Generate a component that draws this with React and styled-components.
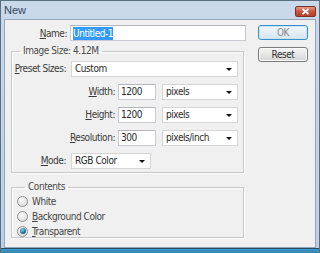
import React from 'react';
import styled, { createGlobalStyle } from 'styled-components';

const GlobalStyle = createGlobalStyle`
  html, body { margin: 0; padding: 0; background: #c5d6e8; }
  body {
    font-family: "Liberation Sans Narrow", "DejaVu Sans Condensed", "Liberation Sans", sans-serif;
    font-size: 10px;
    letter-spacing: -0.45px;
    color: #3a3a3a;
  }
`;

const Window = styled.div`
  width: 320px;
  height: 253px;
  box-sizing: border-box;
  display: flex;
  flex-direction: column;
  background: linear-gradient(#c9d9ea, #bccfe4);
  border: 1px solid #5b6f83;
  border-bottom: none;
`;

const TitleBar = styled.div`
  height: 18px;
  display: flex;
  align-items: center;
  justify-content: space-between;
  padding: 0 3px 0 3px;
`;

const Title = styled.span`
  font-family: "Liberation Sans", sans-serif;
  font-size: 11px;
  letter-spacing: 0;
  color: #34465c;
`;

const CloseButton = styled.div`
  width: 21px;
  height: 11px;
  margin-top: 2px;
  box-sizing: border-box;
  border: 1px solid #7a3328;
  border-radius: 2px;
  background: linear-gradient(#e49a86, #c9533f 50%, #b8402c);
  display: flex;
  align-items: center;
  justify-content: center;
`;

const Body = styled.div`
  flex: 1;
  margin: 0 3px;
  border: 1px solid #93a6ba;
  background: #f0f0f0;
  display: flex;
  padding: 5px 8px 0 6px;
`;

const BottomEdge = styled.div`
  height: 5px;
  background: linear-gradient(#2d4d63 0, #2d4d63 1px, #3f98c6 1px, #2f86b6);
`;

const LeftCol = styled.div`
  width: 235px;
  display: flex;
  flex-direction: column;
`;

const RightCol = styled.div`
  margin-left: 12px;
  display: flex;
  flex-direction: column;
  gap: 7px;
`;

const Row = styled.div`
  display: flex;
  align-items: center;
  height: 15px;
`;

const Label = styled.span`
  width: ${p => p.$w}px;
  margin-right: ${p => p.$gap}px;
  text-align: right;
  flex: none;
  white-space: nowrap;
`;

const Key = styled.span`
  text-decoration: underline;
`;

const TextBox = styled.div`
  width: ${p => p.$w}px;
  height: 16px;
  box-sizing: border-box;
  border: 1px solid #c8ccd2;
  border-top-color: #b2b6bc;
  background: #fff;
  display: flex;
  align-items: center;
  padding-left: 2px;
  color: #2a2a2a;
`;

const Selected = styled.span`
  background: #3399ff;
  color: #fff;
  padding: 1px 0;
`;

const Select = styled.div`
  width: ${p => p.$w}px;
  margin-left: ${p => p.$ml || 0}px;
  height: 16px;
  box-sizing: border-box;
  border: 1px solid #d6d6d6;
  background: #fff;
  display: flex;
  align-items: center;
  justify-content: space-between;
  padding: 0 5px 0 3px;
  color: #2a2a2a;
`;

const Arrow = styled.span`
  width: 0;
  height: 0;
  border-left: 3px solid transparent;
  border-right: 3px solid transparent;
  border-top: 3px solid #111;
  margin-top: 1px;
`;

const Group = styled.fieldset`
  margin: ${p => p.$mt}px 0 0 0;
  width: 233px;
  box-sizing: border-box;
  border: 1px solid #c6c6c6;
  box-shadow: 1px 1px 0 #fff, inset 1px 1px 0 #fff;
  padding: ${p => p.$pad};
  display: flex;
  flex-direction: column;
  gap: ${p => p.$gap}px;
`;

const Legend = styled.legend`
  margin-left: 8px;
  padding: 0 3px;
  line-height: 12px;
  color: #4a4a4a;
`;

const RadioRow = styled.div`
  display: flex;
  align-items: center;
  height: 12px;
  color: #444;
`;

const Radio = styled.span`
  width: 11px;
  height: 11px;
  box-sizing: border-box;
  border-radius: 50%;
  border: 1px solid #8e9294;
  background: radial-gradient(circle at 40% 35%, #fbfbfb, #d4d4d4);
  margin-right: 4px;
  display: flex;
  align-items: center;
  justify-content: center;
`;

const Dot = styled.span`
  width: 6px;
  height: 6px;
  border-radius: 50%;
  background: radial-gradient(circle at 40% 35%, #8fd0ef, #1b6a9c 60%, #0e3d63);
`;

const Button = styled.div`
  width: 50px;
  height: 15px;
  box-sizing: border-box;
  border-radius: 3px;
  border: 1px solid ${p => (p.$primary ? '#3c8fc4' : '#7c7c7c')};
  background: ${p =>
    p.$primary
      ? 'linear-gradient(#f4f8fb, #e3eef6 50%, #d6e7f3)'
      : 'linear-gradient(#f5f5f5, #e6e6e6 50%, #d6d6d6)'};
  box-shadow: inset 0 0 0 1px ${p => (p.$primary ? '#c7e6f7' : '#fbfbfb')};
  display: flex;
  align-items: center;
  justify-content: center;
  color: ${p => (p.$primary ? '#888' : '#333')};
`;

const units = [
  { key: 'W', rest: 'idth:', value: '1200', unit: 'pixels' },
  { key: 'H', rest: 'eight:', value: '1200', unit: 'pixels' },
  { key: 'R', rest: 'esolution:', value: '300', unit: 'pixels/inch' },
];

const radios = [
  { key: '', rest: 'White', checked: false },
  { key: 'B', rest: 'ackground Color', checked: false },
  { key: 'T', rest: 'ransparent', checked: true },
];

export default function App() {
  return (
    <>
      <GlobalStyle />
      <Window>
        <TitleBar>
          <Title>New</Title>
          <CloseButton>
            <svg width="9" height="7" viewBox="0 0 9 7">
              <path d="M1.5 1 L7.5 6 M7.5 1 L1.5 6" stroke="#fff" strokeWidth="1.8" />
            </svg>
          </CloseButton>
        </TitleBar>
        <Body>
          <LeftCol>
            <Row style={{ height: 16 }}>
              <Label $w={56} $gap={3}><Key>N</Key>ame:</Label>
              <TextBox $w={176}><Selected>Untitled-1</Selected></TextBox>
            </Row>

            <Group $mt={4} $pad="4px 0 4px 0" $gap={8}>
              <Legend>Image Size: 4.12M</Legend>
              <Row>
                <Label $w={54} $gap={5}><Key>P</Key>reset Sizes:</Label>
                <Select $w={167}>Custom<Arrow /></Select>
              </Row>
              {units.map(u => (
                <Row key={u.key}>
                  <Label $w={103} $gap={3}><Key>{u.key}</Key>{u.rest}</Label>
                  <TextBox $w={38}>{u.value}</TextBox>
                  <Select $w={76} $ml={6}>{u.unit}<Arrow /></Select>
                </Row>
              ))}
              <Row>
                <Label $w={54} $gap={5}><Key>M</Key>ode:</Label>
                <Select $w={80}>RGB Color<Arrow /></Select>
              </Row>
            </Group>

            <Group $mt={8} $pad="2px 0 0 5px" $gap={3}>
              <Legend>Contents</Legend>
              {radios.map(r => (
                <RadioRow key={r.rest}>
                  <Radio>{r.checked && <Dot />}</Radio>
                  <span>{r.key && <Key>{r.key}</Key>}{r.rest}</span>
                </RadioRow>
              ))}
            </Group>
          </LeftCol>
          <RightCol>
            <Button $primary>OK</Button>
            <Button>Reset</Button>
          </RightCol>
        </Body>
        <BottomEdge />
      </Window>
    </>
  );
}
